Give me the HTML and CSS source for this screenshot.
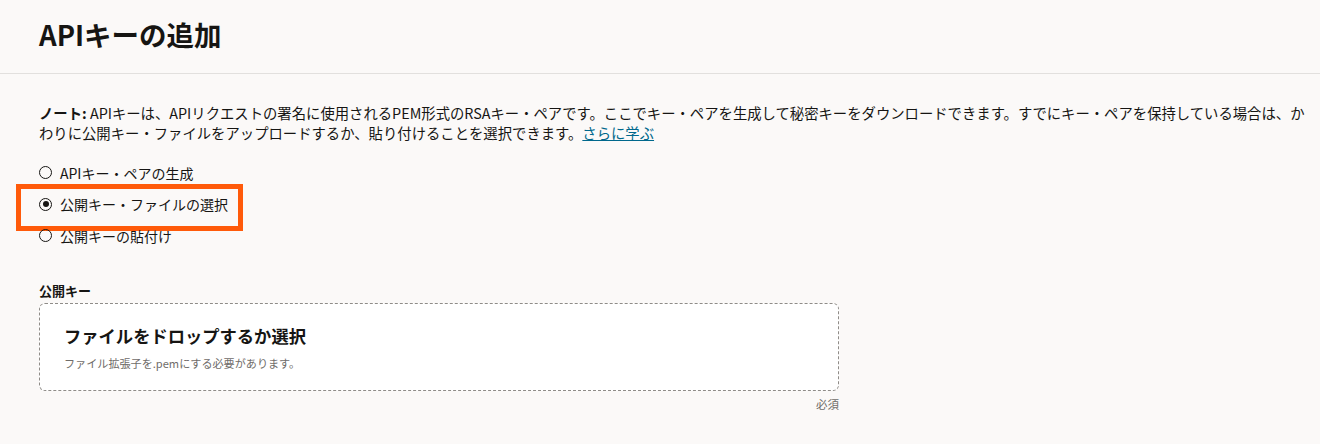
FILE: index.html
```html
<!DOCTYPE html>
<html lang="ja">
<head>
<meta charset="utf-8">
<title>APIキーの追加</title>
<link rel="stylesheet" href="styles.css">
</head>
<body>
<header class="header">
  <h1 class="title">APIキーの追加</h1>
</header>
<main class="content">
  <p class="note"><b>ノート:</b> APIキーは、APIリクエストの署名に使用されるPEM形式のRSAキー・ペアです。ここでキー・ペアを生成して秘密キーをダウンロードできます。すでにキー・ペアを保持している場合は、かわりに公開キー・ファイルをアップロードするか、貼り付けることを選択できます。<a class="link" href="#">さらに学ぶ</a></p>
  <div class="radios">
    <label class="radio"><span class="dot"></span><span>APIキー・ペアの生成</span></label>
    <label class="radio checked"><span class="dot"></span><span>公開キー・ファイルの選択</span><span class="highlight"></span></label>
    <label class="radio"><span class="dot"></span><span>公開キーの貼付け</span></label>
  </div>
  <div class="field">
    <div class="field-label">公開キー</div>
    <div class="drop">
      <div class="drop-title">ファイルをドロップするか選択</div>
      <div class="drop-sub">ファイル拡張子を.pemにする必要があります。</div>
    </div>
    <div class="required">必須</div>
  </div>
</main>
</body>
</html>
```
FILE: styles.css
```css
* { box-sizing: border-box; }
html, body {
  margin: 0;
  padding: 0;
  background: #fbf9f8;
  color: #161513;
  font-family: "Noto Sans CJK JP", "Noto Sans", sans-serif;
}
.header {
  height: 74px;
  border-bottom: 1px solid #e2e0de;
  padding-left: 39px;
  display: flex;
  align-items: center;
}
.title {
  margin: 0;
  margin-top: -6px;
  font-size: 27.5px;
  font-weight: 700;
  line-height: 34px;
}
.content {
  padding: 29px 14px 0 39px;
}
.note {
  margin: 0;
  font-size: 14.35px;
  line-height: 20px;
}
.note b { font-weight: 700; }
.link {
  color: #00688c;
  text-decoration: underline;
}
.radios {
  margin-top: 14px;
  display: flex;
  flex-direction: column;
}
.radio {
  position: relative;
  display: flex;
  align-items: center;
  gap: 8px;
  height: 31.5px;
  font-size: 14px;
  align-self: flex-start;
}
.dot {
  width: 13px;
  height: 13px;
  border: 1.5px solid #161513;
  border-radius: 50%;
  display: flex;
  align-items: center;
  justify-content: center;
  flex: none;
}
.checked .dot::after {
  content: "";
  width: 6px;
  height: 6px;
  border-radius: 50%;
  background: #161513;
}
.highlight {
  position: absolute;
  left: -23px;
  top: -5px;
  width: 227px;
  height: 47px;
  border: 5px solid #ff5a0a;
}
.field {
  margin-top: 30px;
  width: 800px;
}
.field-label {
  font-size: 13px;
  font-weight: 700;
  line-height: 18px;
  margin-bottom: 3px;
}
.drop {
  height: 88px;
  background: #fff;
  border: 1px dashed #8f8c88;
  border-radius: 6px;
  padding: 20px 24px 0 24px;
}
.drop-title {
  font-size: 17.3px;
  font-weight: 700;
  line-height: 24px;
}
.drop-sub {
  margin-top: 7px;
  font-size: 11.1px;
  line-height: 16px;
  color: #6f6c69;
}
.required {
  text-align: right;
  font-size: 11.5px;
  line-height: 16px;
  color: #6f6c69;
  margin-top: 5px;
}
```
